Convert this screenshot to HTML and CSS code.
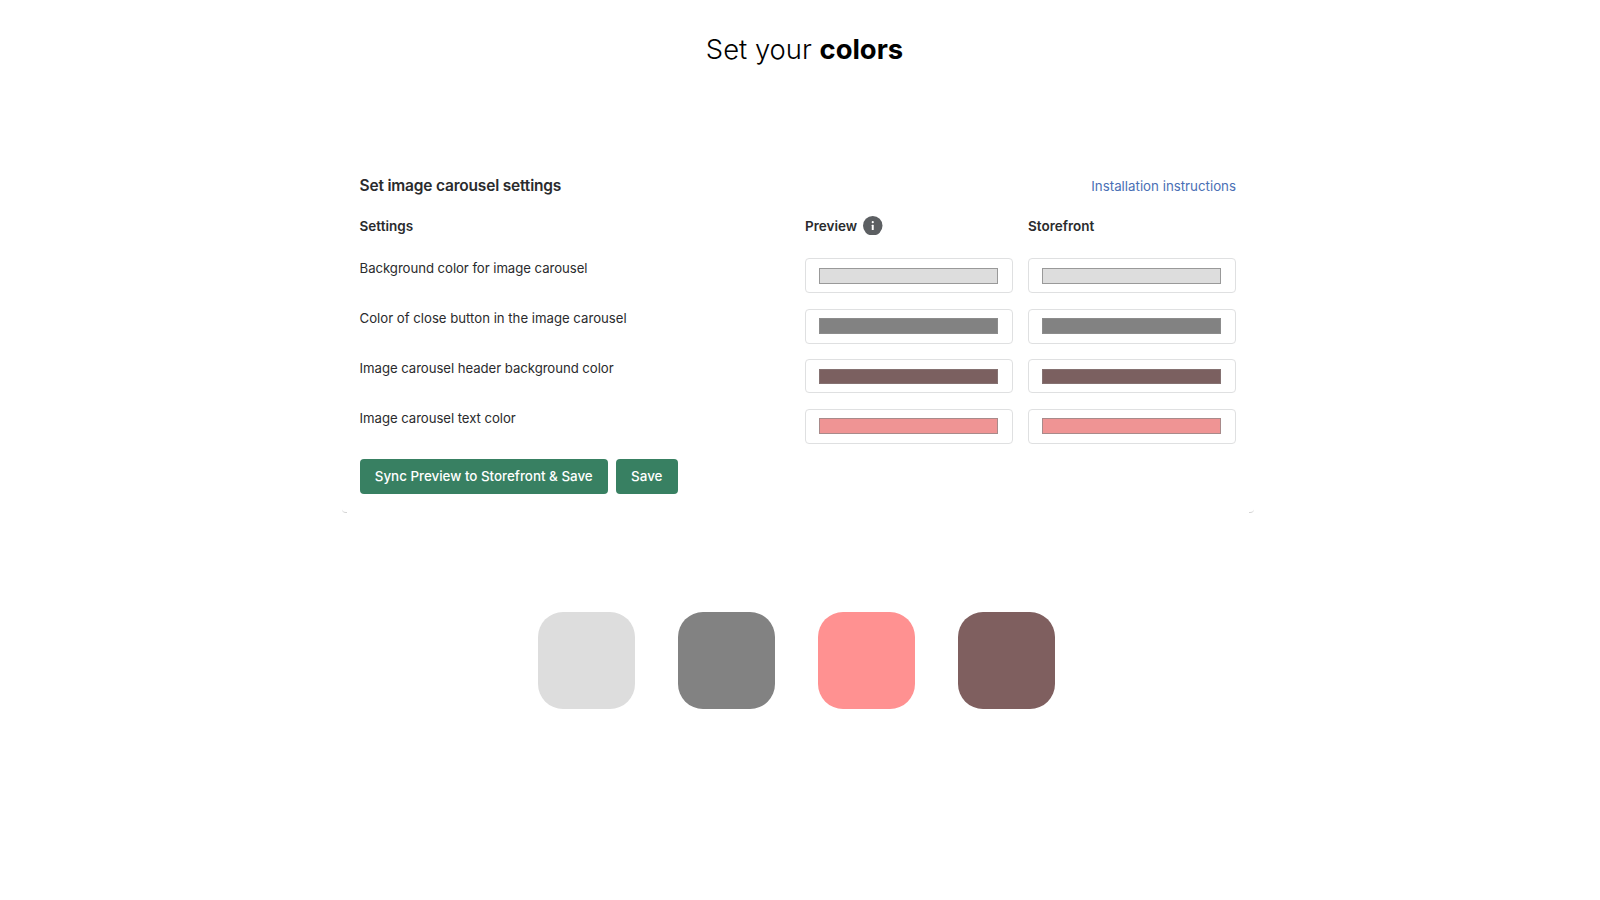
FILE: index.html
```html
<!DOCTYPE html>
<html lang="en">
<head>
<meta charset="utf-8">
<title>Set your colors</title>
<link rel="stylesheet" href="styles.css">
</head>
<body>
<h1 class="headline">Set your <strong>colors</strong></h1>
<main class="card">
  <header class="card-header">
    <h2 class="card-title">Set image carousel settings</h2>
    <a class="link" href="#">Installation instructions</a>
  </header>
  <div class="row row-head">
    <div class="head">Settings</div>
    <div class="head">Preview
      <svg class="info" viewBox="0 0 20 20"><circle cx="10" cy="10" r="10" fill="#5c5f62"/><rect x="9" y="9" width="2" height="5.4" rx=".4" fill="#fff"/><circle cx="10" cy="6.3" r="1.1" fill="#fff"/></svg>
    </div>
    <div class="head">Storefront</div>
  </div>
  <div class="row row-first">
    <div class="label">Background color for image carousel</div>
    <div class="field"><div class="bar bar-light"></div></div>
    <div class="field"><div class="bar bar-light"></div></div>
  </div>
  <div class="row">
    <div class="label label-wide">Color of close button in the image carousel</div>
    <div class="field field-high"><div class="bar bar-gray"></div></div>
    <div class="field field-high"><div class="bar bar-gray"></div></div>
  </div>
  <div class="row">
    <div class="label">Image carousel header background color</div>
    <div class="field field-short"><div class="bar bar-brown"></div></div>
    <div class="field field-short"><div class="bar bar-brown"></div></div>
  </div>
  <div class="row">
    <div class="label">Image carousel text color</div>
    <div class="field field-high"><div class="bar bar-pink"></div></div>
    <div class="field field-high"><div class="bar bar-pink"></div></div>
  </div>
  <div class="actions">
    <button class="btn">Sync Preview to Storefront &amp; Save</button>
    <button class="btn">Save</button>
  </div>
</main>
<section class="swatches">
  <div class="swatch light"></div>
  <div class="swatch gray"></div>
  <div class="swatch pink"></div>
  <div class="swatch brown"></div>
</section>
</body>
</html>
```
FILE: styles.css
```css
* { box-sizing: border-box; }
body { margin: 0; background: #fff; color: #2a2b2d; font-family: Inter, "Liberation Sans", sans-serif; }
.headline { margin: 0; padding: 32px 0 0 9px; height: 155px; text-align: center; font-size: 27.4px; line-height: 34px; font-weight: 300; color: #000; }
.headline strong { font-weight: 700; }

.card { position: relative; width: 911.5px; height: 358px; margin-left: 342px; padding: 17px 17.5px 0 17.6px; }
/* faint edge marks at the lower card corners */
.card::before, .card::after { content: ""; position: absolute; bottom: 0; width: 5px; height: 4px; border-bottom: 1px solid #d4d4d4; }
.card::before { left: 0; border-bottom-left-radius: 4px; }
.card::after { right: 0; border-bottom-right-radius: 4px; }
.card-header { display: flex; justify-content: space-between; align-items: center; height: 28px; }
.card-title { margin: 0; font-size: 15.5px; letter-spacing: -0.19px; font-weight: 600; line-height: 24px; }
.link { font-size: 13.3px; color: #4a6fb5; text-decoration: none; }

.row { display: grid; grid-template-columns: 430px 207.5px 207.5px; column-gap: 15.5px; height: 50px; }
.row-head { height: 58px; padding-top: 13.5px; }
.row-first { height: 51px; }
.head { display: flex; align-items: center; height: 24px; gap: 6px; font-size: 13.5px; font-weight: 600; }
.info { width: 19.5px; height: 19.5px; }
.label { font-size: 13.2px; letter-spacing: -0.06px; line-height: 18px; }
.row-first .label { line-height: 20px; }
.label-wide { letter-spacing: -0.01px; }
.field { height: 35px; padding: 9px 13.5px 9px 13px; border: 1px solid #dfe0e1; border-radius: 4px; }
.field-short { height: 34px; }
.field-high { padding-top: 8px; }
.bar { height: 16px; border: 1px solid #999; }
.bar-light { background: #ddd; }
.bar-gray { background: #828282; border-color: #8c8c8c; }
.bar-brown { height: 15px; background: #7b6060; border-color: #857272; }
.bar-pink { background: #ef9494; border-color: #a88a8a; }

.actions { display: flex; gap: 8px; }
.btn { height: 35px; padding: 0 15.2px 1px; border: 0; border-radius: 4px; background: #388062; color: #fff; font: 500 13.38px Inter, sans-serif; }

.swatches { display: flex; gap: 43px; margin: 99px 0 0 538px; }
.swatch { width: 97px; height: 97px; border-radius: 25px; }
.light { background: #ddd; }
.gray { background: #828282; }
.brown { background: #7f5f5f; }
.pink { background: #ff9191; }
```
